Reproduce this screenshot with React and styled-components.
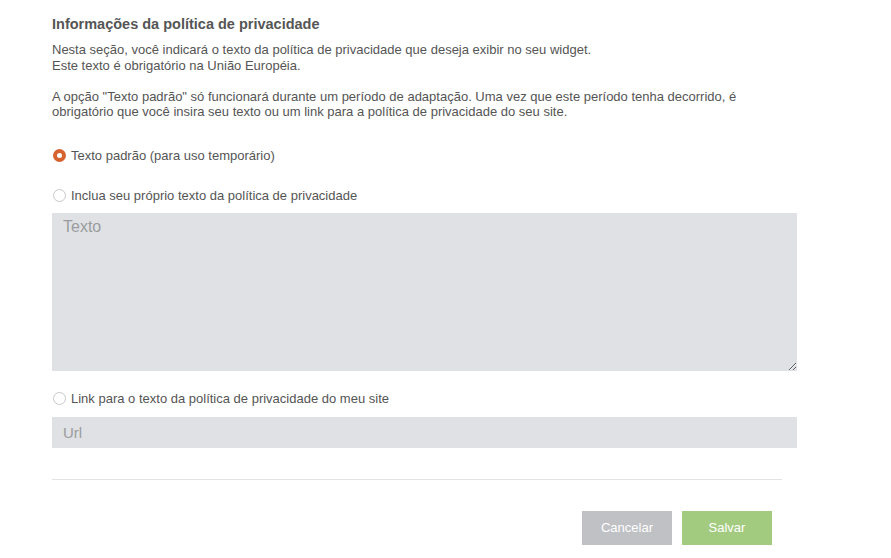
import React, { useState } from "react";
import styled, { createGlobalStyle } from "styled-components";

const GlobalStyle = createGlobalStyle`
  body {
    margin: 0;
    background: #fff;
    font-family: "Liberation Sans", Arial, sans-serif;
    color: #555;
  }
`;

const App = () => {
  const [choice, setChoice] = useState("default");

  return (
    <>
      <GlobalStyle />
      <Page>
        <Title>Informações da política de privacidade</Title>
        <Text>
          Nesta seção, você indicará o texto da política de privacidade que deseja exibir no seu widget.
          <br />
          Este texto é obrigatório na União Européia.
          <br />
          <br />
          A opção "Texto padrão" só funcionará durante um período de adaptação. Uma vez que este período tenha decorrido, é
          <br />
          obrigatório que você insira seu texto ou um link para a política de privacidade do seu site.
        </Text>

        <Option $top={28} onClick={() => setChoice("default")}>
          <Radio $checked={choice === "default"} />
          Texto padrão (para uso temporário)
        </Option>

        <Option $top={24} onClick={() => setChoice("own")}>
          <Radio $checked={choice === "own"} />
          Inclua seu próprio texto da política de privacidade
        </Option>
        <TextArea placeholder="Texto" />

        <Option $top={20} onClick={() => setChoice("link")}>
          <Radio $checked={choice === "link"} />
          Link para o texto da política de privacidade do meu site
        </Option>
        <UrlInput placeholder="Url" />

        <Divider />

        <Actions>
          <Button $bg="#c0c1c5">Cancelar</Button>
          <Button $bg="#a3cb80">Salvar</Button>
        </Actions>
      </Page>
    </>
  );
};

const Page = styled.div`
  padding: 15px 0 0 52px;
  width: 745px;
`;

const Title = styled.h2`
  margin: 0;
  font-size: 14.5px;
  line-height: 18px;
  font-weight: 700;
  color: #555;
`;

const Text = styled.p`
  margin: 9px 0 0;
  font-size: 13px;
  line-height: 15.6px;
  color: #555;
`;

const Option = styled.label`
  display: flex;
  align-items: center;
  gap: 5px;
  height: 16px;
  margin-top: ${(p) => p.$top}px;
  font-size: 13px;
  color: #555;
  cursor: pointer;
`;

const Radio = styled.span`
  box-sizing: border-box;
  width: 13px;
  height: 13px;
  margin-left: 1px;
  border-radius: 50%;
  border: ${(p) => (p.$checked ? "4px solid #d5622f" : "1px solid #c8c8c8")};
  background: #fff;
  flex-shrink: 0;
`;

const Field = `
  box-sizing: border-box;
  display: block;
  width: 745px;
  border: none;
  outline: none;
  background: #dfe1e4;
  font-family: "Liberation Sans", Arial, sans-serif;
  color: #555;
  padding: 0 11px;
  &::placeholder {
    color: #9a9c9f;
  }
`;

const TextArea = styled.textarea`
  ${Field}
  height: 158px;
  margin-top: 9px;
  padding-top: 4px;
  font-size: 16px;
  line-height: 19px;
  resize: vertical;
`;

const UrlInput = styled.input`
  ${Field}
  height: 31px;
  margin-top: 10px;
  font-size: 15px;
`;

const Divider = styled.hr`
  width: 730px;
  margin: 31px 0 0;
  border: none;
  border-top: 1px solid #e3e3e3;
`;

const Actions = styled.div`
  width: 720px;
  display: flex;
  justify-content: flex-end;
  gap: 10px;
  margin-top: 31px;
`;

const Button = styled.button`
  width: 90px;
  height: 34px;
  border: none;
  background: ${(p) => p.$bg};
  color: #fff;
  font-family: "Liberation Sans", Arial, sans-serif;
  font-size: 13px;
  cursor: pointer;
`;

export default App;
